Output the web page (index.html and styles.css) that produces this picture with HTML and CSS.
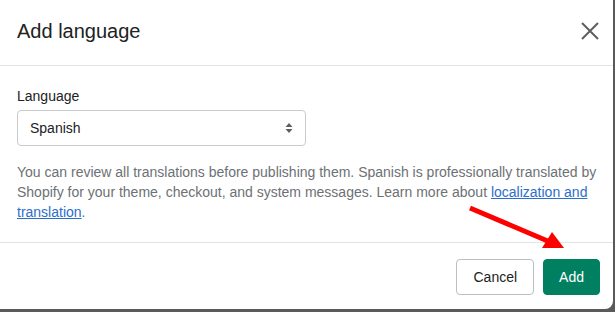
FILE: index.html
```html
<!DOCTYPE html>
<html lang="en">
<head>
    <meta charset="UTF-8">
    <title>Add language</title>
    <link rel="stylesheet" href="styles.css">
</head>
<body>
    <div class="modal">
        <div class="modal-header">
            <h2>Add language</h2>
            <button class="close" aria-label="Close">
                <svg width="20" height="20" viewBox="0 0 20 20"><path d="M2 2L18 18M18 2L2 18" stroke="#5c5f62" stroke-width="2" fill="none"/></svg>
            </button>
        </div>
        <div class="modal-body">
            <label class="label" for="lang">Language</label>
            <div class="select">
                <span>Spanish</span>
                <svg width="8" height="12" viewBox="0 0 8 12"><path d="M4 1L7.5 5H0.5Z M4 11L7.5 7H0.5Z" fill="#5c5f62"/></svg>
            </div>
            <p class="help">You can review all translations before publishing them. Spanish is professionally translated by Shopify for your theme, checkout, and system messages. Learn more about <a href="#">localization and translation</a>.</p>
        </div>
        <div class="modal-footer">
            <button class="btn">Cancel</button>
            <button class="btn primary">Add</button>
        </div>
        <svg class="arrow" width="120" height="60" viewBox="0 0 120 60">
            <line x1="4" y1="4" x2="84" y2="38" stroke="#f00" stroke-width="5"/>
            <path d="M98 44L76 44L86 28Z" fill="#f00"/>
        </svg>
    </div>
</body>
</html>
```

FILE: styles.css
```css
body {
    margin: 0;
    background-color: #5a5a5a;
    font-family: "Liberation Sans", Arial, sans-serif;
    color: #202223;
    height: 312px;
    overflow: hidden;
}
.modal {
    position: relative;
    width: 613px;
    height: 309px;
    background: white;
    border-bottom-right-radius: 8px;
    display: flex;
    flex-direction: column;
}
.modal-header {
    height: 66px;
    border-bottom: 1px solid #e1e3e5;
    display: flex;
    align-items: center;
    justify-content: space-between;
    padding: 0 17px;
    box-sizing: border-box;
}
.modal-header h2 {
    margin: 0;
    font-size: 20px;
    font-weight: normal;
    margin-top: -3px;
}
.close {
    border: none;
    background: none;
    padding: 0;
    margin-right: -4px;
    width: 20px;
    height: 20px;
    margin-top: -3px;
}
.modal-body {
    padding: 20px 8px 0 17px;
    height: 177px;
    box-sizing: border-box;
    border-bottom: 1px solid #e1e3e5;
}
.label {
    display: block;
    font-size: 14px;
    line-height: 20px;
    margin-bottom: 4px;
}
.select {
    width: 289px;
    height: 36px;
    box-sizing: border-box;
    border: 1px solid #c9cccf;
    border-radius: 4px;
    display: flex;
    align-items: center;
    justify-content: space-between;
    padding: 0 12px 0 12px;
    font-size: 14px;
}
.help {
    margin: 16px 0 0;
    font-size: 14px;
    line-height: 20px;
    color: #6d7175;
}
.help a {
    color: #2c6ecb;
}
.modal-footer {
    flex: 1;
    display: flex;
    justify-content: flex-end;
    align-items: flex-start;
    gap: 9px;
    padding: 16px 13px 0 0;
}
.btn {
    height: 36px;
    padding: 0 16px;
    font-family: inherit;
    font-size: 14px;
    color: #202223;
    background: white;
    border: 1px solid #babfc3;
    border-radius: 4px;
}
.btn.primary {
    background: #008060;
    border-color: #008060;
    color: white;
    padding: 0 15px;
}
.arrow {
    position: absolute;
    left: 466px;
    top: 204px;
}
```
